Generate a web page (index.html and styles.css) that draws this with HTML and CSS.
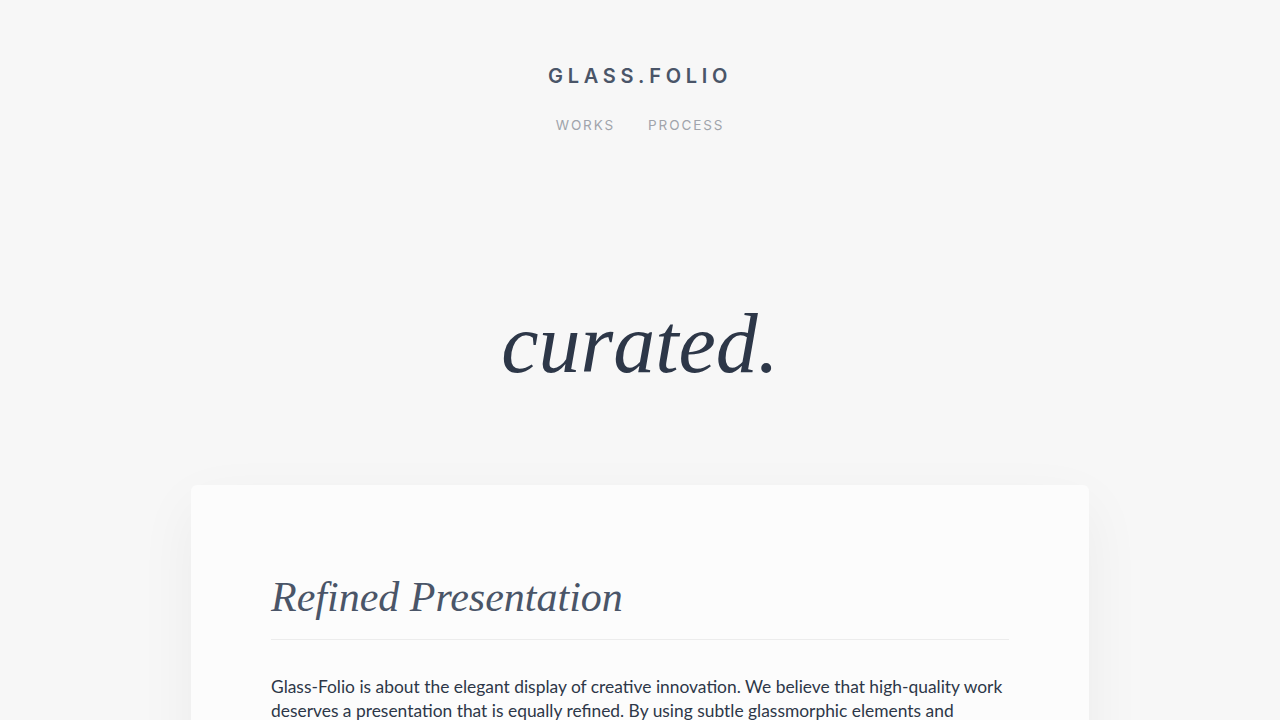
FILE: index.html
```html
<!DOCTYPE html>
<html lang="en">
<head>
    <meta charset="UTF-8">
    <meta name="viewport" content="width=device-width, initial-scale=1.0">
    <title>Glass.Folio</title>
    <link rel="stylesheet" href="styles.css">
</head>
<body>
    <header class="header">
        <div class="logo">GLASS.FOLIO</div>
        <ul class="nav">
            <li><a href="#">WORKS</a></li>
            <li><a href="#">PROCESS</a></li>
        </ul>
    </header>

    <section class="hero">
        <h1 class="hero-title">curated.</h1>
    </section>

    <main class="card">
        <h2 class="card-title">Refined Presentation</h2>
        <p class="card-text">Glass-Folio is about the elegant display of creative innovation. We believe that high-quality work deserves a presentation that is equally refined. By using subtle glassmorphic elements and minimalist typography, we let the work speak for itself.</p>
    </main>
</body>
</html>
```
FILE: styles.css
```css
*{
    margin: 0;
    padding: 0;
    box-sizing: border-box;
}
ul li{
    list-style: none;
}
body{
    background-color: #f7f7f7;
    font-family: Inter, "Noto Sans", sans-serif;
    color: #2d3748;
}
.header{
    display: flex;
    flex-direction: column;
    align-items: center;
    padding-top: 64px;
}
.logo{
    font-size: 20px;
    font-weight: 600;
    letter-spacing: 0.235em;
    color: #4a5568;
    line-height: 24px;
}
.nav{
    display: flex;
    gap: 33px;
    margin-top: 26px;
}
.nav li a{
    text-decoration: none;
    font-size: 13.5px;
    letter-spacing: 0.14em;
    color: #a0a4ab;
    line-height: 20px;
}
.hero{
    display: flex;
    justify-content: center;
    padding-top: 167px;
    height: 350px;
}
.hero-title{
    font-family: "Liberation Serif", serif;
    font-style: italic;
    font-weight: 400;
    font-size: 84px;
    line-height: 84px;
    color: #2d3748;
}
.card{
    width: 898px;
    margin: 0 auto;
    background-color: #fcfcfc;
    border-radius: 6px;
    padding: 80px;
    box-shadow: 0 20px 60px rgba(0, 0, 0, 0.05);
}
.card-title{
    font-family: "Liberation Serif", serif;
    font-style: italic;
    font-weight: 400;
    font-size: 42px;
    line-height: 64px;
    color: #4a5568;
    padding-bottom: 10px;
    border-bottom: 1px solid #ececec;
}
.card-text{
    margin-top: 35px;
    font-family: Lato, "Noto Sans", sans-serif;
    font-size: 17.4px;
    line-height: 24px;
    color: #2d3748;
}
```
